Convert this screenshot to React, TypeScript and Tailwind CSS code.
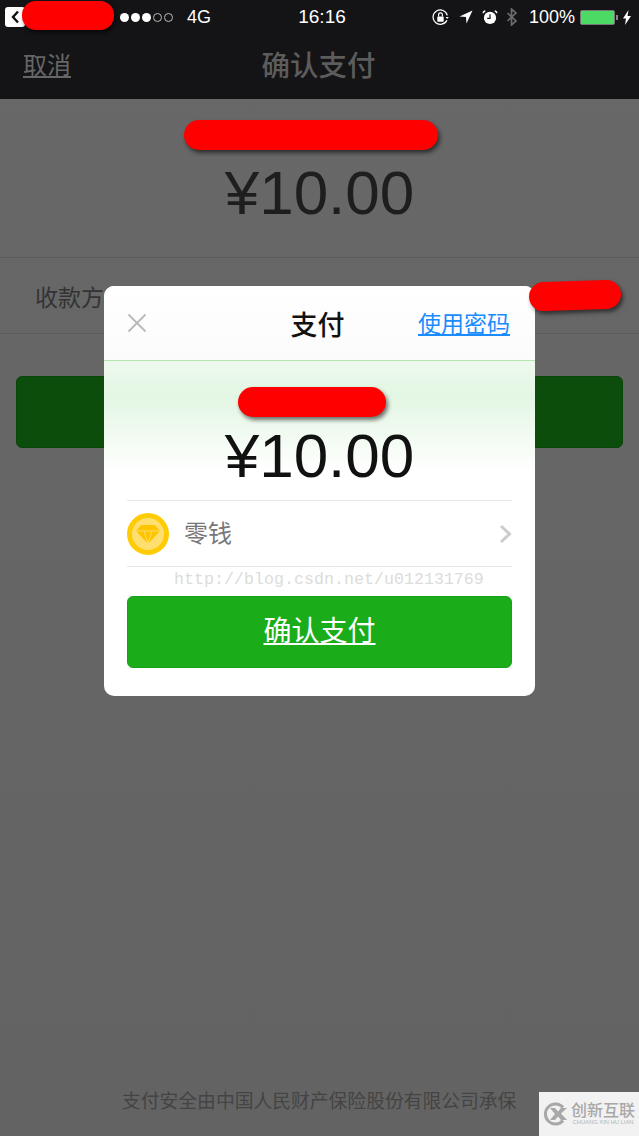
const sans = "font-['Liberation_Sans','Noto_Sans_CJK_SC',sans-serif]";

function StatusBar() {
  return (
    <div className="flex h-[34px] items-center pl-[5px] text-white">
      <div className="flex h-[20px] w-[20px] shrink-0 items-center justify-center rounded-[3px] bg-white">
        <svg width="10" height="14" viewBox="0 0 10 14" fill="none">
          <path d="M8 1.5 3 7l5 5.5" stroke="#111" strokeWidth="2.4" />
        </svg>
      </div>
      <div className="ml-[95px] flex w-[58px] shrink-0 items-center gap-[2px]">
        {[0, 1, 2].map((i) => (
          <span key={i} className="h-[9px] w-[9px] rounded-full bg-white" />
        ))}
        {[3, 4].map((i) => (
          <span key={i} className="h-[9px] w-[9px] rounded-full border border-[#bbbbbb]" />
        ))}
      </div>
      <span className="ml-[9px] w-[60px] shrink-0 text-[18px]">4G</span>
      <span className="ml-[40px] w-[70px] shrink-0 text-center text-[19px]">16:16</span>
      <div className="ml-[75px] flex shrink-0 items-center">
        <svg width="17" height="17" viewBox="0 0 16 16" fill="none">
          <path d="M14 10.5A6.8 6.8 0 1 1 14.4 6" stroke="#fff" strokeWidth="1.2" />
          <path d="m12.8 7.5 3 0-1.5 2z" fill="#fff" />
          <rect x="5" y="7" width="6" height="5" rx="0.6" fill="#fff" />
          <path d="M6.2 7V5.5a1.8 1.8 0 0 1 3.6 0V7" stroke="#fff" strokeWidth="1.1" />
        </svg>
        <svg className="ml-[10px]" width="14" height="14" viewBox="0 0 14 14">
          <path d="M13.500.5.500 6.500 7 7l.5 6.500z" fill="#fff" />
        </svg>
        <svg className="ml-[9px]" width="16" height="16" viewBox="0 0 17 16">
          <circle cx="8.500" cy="9" r="6.500" fill="#fff" />
          <path d="M8.500 5v4.500h-3" stroke="#141416" strokeWidth="1.3" fill="none" />
          <path d="M1 4.500 4 1.500 2.500.8.6 2.600zM16 4.500l-3-3 1.500-.7 1.900 1.800z" fill="#fff" />
        </svg>
        <svg className="ml-[8px]" width="12" height="18" viewBox="0 0 12 18" fill="none">
          <path d="m1.500 5 8.500 8-4.500 4V1l4.500 4-8.500 8" stroke="#6b6b6b" strokeWidth="1.7" />
        </svg>
        <span className="ml-[11px] text-[18px]">100%</span>
        <div className="ml-[5px] h-[15px] w-[35px] rounded-[2px] border border-[#777777] bg-[#4cd964]" />
        <span className="ml-[1px] h-[5px] w-[2px] bg-[#888888]" />
        <svg className="ml-[5px]" width="8" height="15" viewBox="0 0 8 15">
          <path d="M5.500 0 0 8.500h3L2 15l6-9H4.500z" fill="#fff" />
        </svg>
      </div>
    </div>
  );
}

function Redaction({ className }: { className: string }) {
  return <div className={`absolute bg-[#ff0000] shadow-[2px_3px_4px_rgba(0,0,0,0.55)] ${className}`} />;
}

function PayDialog() {
  return (
    <div className="absolute left-[104px] top-[286px] h-[410px] w-[431px] overflow-hidden rounded-[10px] bg-white">
      <div className="grid h-[75px] grid-cols-[1fr_auto_1fr] items-center border-b border-[#b5e6b0] bg-gradient-to-b from-white to-[#fbfbfb] pl-[23px] pr-[25px]">
        <svg width="20" height="20" viewBox="0 0 20 20" fill="none">
          <path d="m1.500 1.500 17 17m0-17-17 17" stroke="#b9b9b9" strokeWidth="1.8" />
        </svg>
        <span className="-ml-[2px] pt-[6px] text-[27px] leading-[40px] font-medium text-[#111111]">支付</span>
        <span className="justify-self-end pt-[2px] text-[23px] leading-[30px] text-[#1a8cff] underline underline-offset-2">使用密码</span>
      </div>
      <div className="h-[139px] bg-gradient-to-b from-[#eef9ee] via-[#e3f6e3] via-25% to-white to-80% pt-[60px] text-center">
        <div className="text-[62px] leading-[70px] text-[#111111]">¥10.00</div>
      </div>
      <div className="mx-[23px] border-t border-[#e8e8e8]">
        <div className="flex h-[66px] items-center border-b border-[#e8e8e8]">
          <div className="flex h-[42px] w-[42px] items-center justify-center rounded-full border-[5px] border-[#ffcb05] bg-[#ffdf70]">
            <svg width="24" height="20" viewBox="0 0 24 20">
              <path d="M5 1h14l5 6-12 13L0 7z" fill="#ffc400" />
              <path d="M0 7h24M8 7l4 13 4-13" stroke="#ffdf70" strokeWidth="0.9" fill="none" />
            </svg>
          </div>
          <span className="ml-[15px] flex-1 text-[24px] text-[#777777]">零钱</span>
          <svg width="13" height="20" viewBox="0 0 13 20" fill="none">
            <path d="m2 2 8.500 8L2 18" stroke="#cccccc" strokeWidth="3" />
          </svg>
        </div>
        <div className="pl-[47px] font-['Liberation_Mono',monospace] text-[16.67px] leading-[25px] text-[#dcdcd8]">
          http://blog.csdn.net/u012131769
        </div>
        <button
          type="button"
          className="mt-[4px] flex h-[72px] w-full items-center justify-center rounded-[6px] border border-[#18a018] bg-[#1aad19] text-[28px] text-white underline underline-offset-2"
        >
          确认支付
        </button>
      </div>
    </div>
  );
}

export default function App() {
  return (
    <div className={`relative flex h-[1136px] w-[639px] flex-col overflow-hidden bg-gradient-to-b from-[#686868] to-[#636363] ${sans}`}>
      <div className="h-[99px] bg-[#141416]">
        <StatusBar />
        <div className="relative flex h-[65px] items-center justify-center">
          <span className="absolute left-[23px] top-[14px] text-[24px] text-[#666666] underline underline-offset-2">取消</span>
          <span className="-ml-[2px] text-[28.5px] font-medium text-[#5c5c5c]">确认支付</span>
        </div>
      </div>

      <div className="h-[159px] border-b border-[#5c5c5c] pt-[56px] text-center">
        <div className="text-[62px] leading-[76px] text-[#1e1e1e]">¥10.00</div>
      </div>
      <div className="flex h-[76px] items-center border-b border-[#5c5c5c] pl-[35px] pt-[6px] text-[23px] text-[#333333]">
        收款方
      </div>
      <div className="mx-[16px] mt-[42px] h-[72px] rounded-[6px] border border-[#0b450b] bg-[#0c4d0c]" />

      <div className="mt-auto flex h-[44px] items-start">
        <div className="flex-1 pl-[122px] pt-[1px] text-[18.8px] leading-[18px] whitespace-nowrap text-[#444444]">
          支付安全由中国人民财产保险股份有限公司承保
        </div>
        <div className="flex h-[44px] w-[100px] items-center bg-[#f2f2f2] pl-[3px]">
          <svg width="26" height="24" viewBox="0 0 26 24" fill="none">
            <path d="M21 5.500A10 10 0 1 0 21 18.500" stroke="#a8a8a8" strokeWidth="3" />
            <path d="m8 6 5 6-5 6h5l3-3.500 3 3.500h6l-6-6.500L25 6h-6l-3 3.500L13 6z" fill="#a8a8a8" />
          </svg>
          <div className="ml-[3px] text-center">
            <div className="text-[16px] leading-[17px] font-medium whitespace-nowrap text-[#a8a8a8]">创新互联</div>
            <div className="text-[5.800px] leading-[7px] whitespace-nowrap text-[#b4b4b4]">CHUANG XIN HU LIAN</div>
          </div>
        </div>
      </div>

      <PayDialog />

      <Redaction className="left-[22px] top-[1px] h-[29px] w-[92px] rounded-[14px]" />
      <Redaction className="left-[184px] top-[120px] h-[30px] w-[254px] rounded-[15px]" />
      <Redaction className="left-[529px] top-[281px] h-[29px] w-[92px] -rotate-2 rounded-[15px]" />
      <Redaction className="left-[238px] top-[387px] h-[30px] w-[148px] rounded-[15px]" />
    </div>
  );
}
